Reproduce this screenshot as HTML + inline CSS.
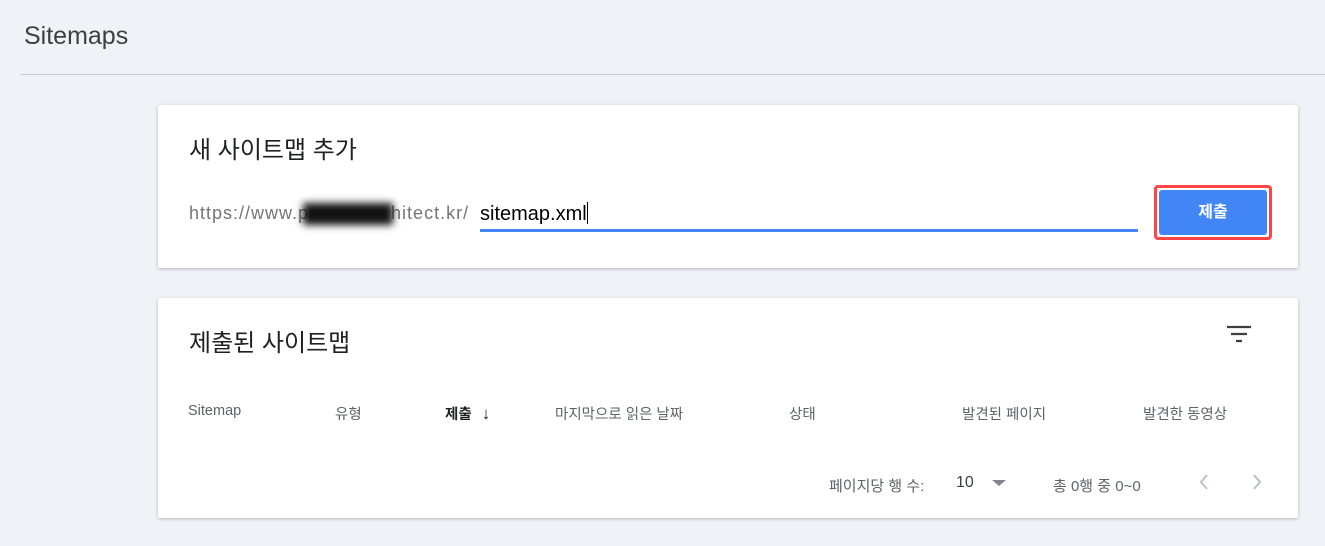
<!DOCTYPE html>
<html><head><meta charset="utf-8"><style>
body{margin:0;width:1325px;height:546px;background:#eff2f7;font-family:"Liberation Sans","Noto Sans CJK KR",sans-serif;position:relative;overflow:hidden}
.abs{position:absolute}
.card{position:absolute;background:#fff;border-radius:2px;box-shadow:0 1px 3px rgba(0,0,0,.25)}
.h{font-size:24px;color:#202124}
.th{position:absolute;top:403px;font-size:14.5px;color:#5f6368}
</style></head><body>
<div class="abs" style="left:24px;top:22px;font-size:25px;color:#3c4043">Sitemaps</div>
<div class="abs" style="left:20px;top:74px;width:1305px;height:1px;background:#c8cacd"></div>

<div class="card" style="left:158px;top:105px;width:1140px;height:163px">
 <div class="abs h" style="left:31px;top:25px">새 사이트맵 추가</div>
 <div class="abs" style="left:31px;top:98px;font-size:18px;letter-spacing:1px;color:#757575;white-space:nowrap">https://www.p<span style="display:inline-block;width:90px;height:22px;background:#111;filter:blur(4px);vertical-align:middle;margin-left:-6px;margin-right:-2px"></span>hitect.kr/</div>
 <div class="abs" style="left:322px;top:97px;font-size:20px;color:#000">sitemap.xml<span style="display:inline-block;width:1px;height:22px;background:#000;vertical-align:-4px"></span></div>
 <div class="abs" style="left:322px;top:124px;width:658px;height:3px;background:#4285f4"></div>
 <div class="abs" style="left:996px;top:80px;width:118px;height:55px;border:3px solid #f44;border-radius:4px;box-sizing:border-box"></div>
 <div class="abs" style="left:1001px;top:85px;width:108px;height:45px;background:#4285f4;border-radius:3px;color:#fff;font-size:16px;font-weight:bold;text-align:center;line-height:45px">제출</div>
</div>

<div class="card" style="left:158px;top:298px;width:1140px;height:220px">
 <div class="abs h" style="left:31px;top:25px">제출된 사이트맵</div>
 <svg class="abs" style="left:1068px;top:26px" width="26" height="22"><path d="M1 3h24M5 10h16M10 17h6" stroke="#3c4043" stroke-width="2.2"/></svg>
</div>
<div class="th" style="left:188px">Sitemap</div>
<div class="th" style="left:335px">유형</div>
<div class="th" style="left:445px;color:#202124;font-weight:bold">제출 <span style="font-weight:normal;font-size:17px;margin-left:6px">↓</span></div>
<div class="th" style="left:555px">마지막으로 읽은 날짜</div>
<div class="th" style="left:789px">상태</div>
<div class="th" style="left:962px">발견된 페이지</div>
<div class="th" style="left:1143px">발견한 동영상</div>
<div class="abs" style="left:829px;top:475px;font-size:15px;color:#5f6368">페이지당 행 수:</div>
<div class="abs" style="left:956px;top:474px;font-size:16px;color:#3c4043">10</div>
<div class="abs" style="left:992px;top:480px;width:0;height:0;border:7px solid transparent;border-top:6px solid #80868b;border-bottom:0"></div>
<div class="abs" style="left:1053px;top:475px;font-size:15px;color:#5f6368">총 0행 중 0~0</div>
<svg class="abs" style="left:1197px;top:473px" width="70" height="18"><path d="M10 2L4 9l6 7M57 2l6 7-6 7" stroke="#bdc1c6" stroke-width="2" fill="none"/></svg>
</body></html>
